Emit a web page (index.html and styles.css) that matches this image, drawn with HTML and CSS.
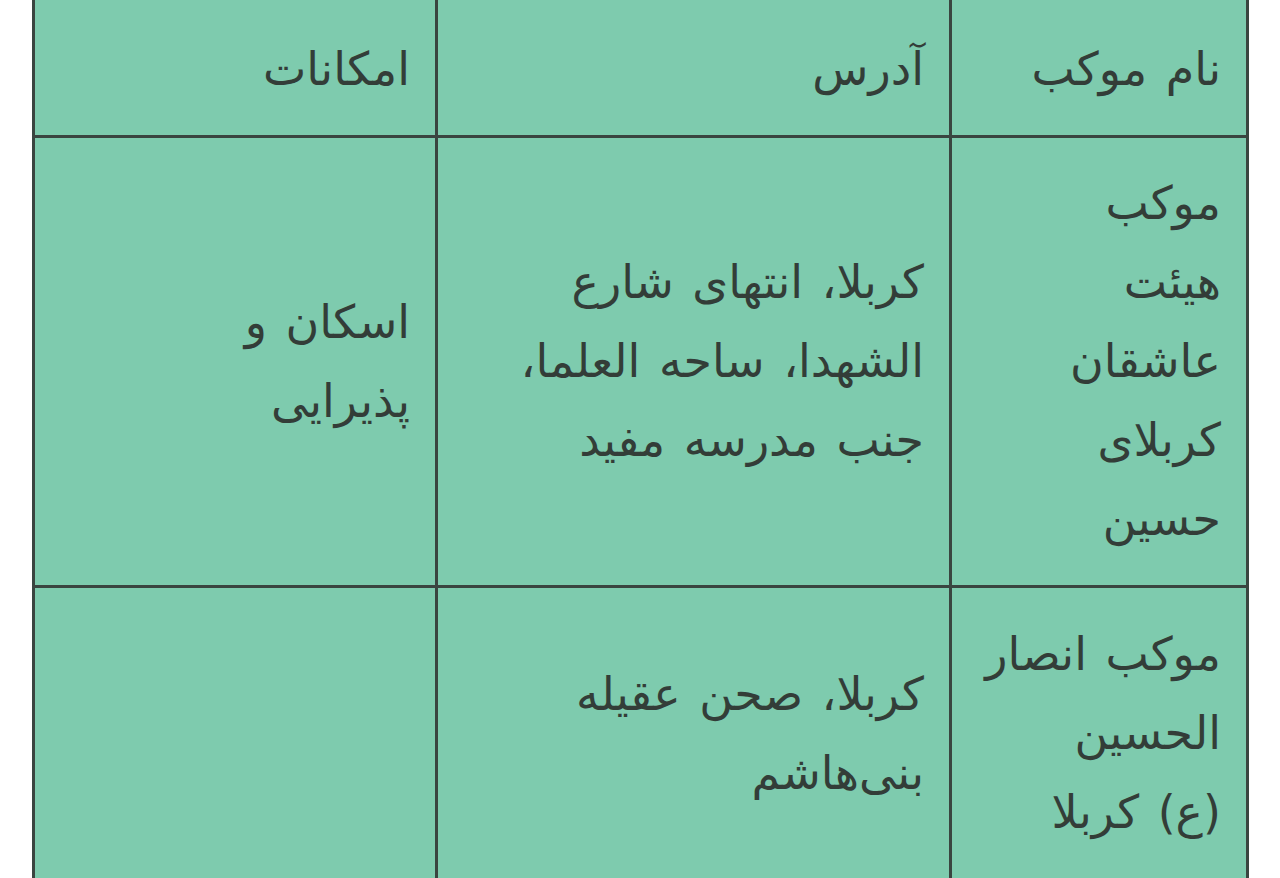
FILE: index.html
```html
<!DOCTYPE html>
<html lang="fa" dir="rtl">
<head>
<meta charset="utf-8">
<title>مواکب</title>
<link rel="stylesheet" href="styles.css">
</head>
<body>
<div class="wrap">
<table class="mawakib">
  <colgroup>
    <col class="c-name">
    <col class="c-addr">
    <col class="c-fac">
  </colgroup>
  <thead>
    <tr>
      <th>نام موکب</th>
      <th>آدرس</th>
      <th>امکانات</th>
    </tr>
  </thead>
  <tbody>
    <tr>
      <td>موکب<br>هیئت<br>عاشقان<br>کربلای<br>حسین</td>
      <td>کربلا، انتهای شارع<br>الشهدا، ساحه العلما،<br>جنب مدرسه مفید</td>
      <td>اسکان و<br>پذیرایی</td>
    </tr>
    <tr>
      <td>موکب انصار<br>الحسین<br>(ع) کربلا</td>
      <td>کربلا، صحن عقیله<br>بنی‌هاشم</td>
      <td></td>
    </tr>
  </tbody>
</table>
</div>
</body>
</html>
```
FILE: styles.css
```css
html, body {
  margin: 0;
  padding: 0;
  background: #ffffff;
}
body {
  font-family: "DejaVu Sans", "Noto Sans", sans-serif;
  color: #333d38;
  overflow: hidden;
}
.wrap {
  padding: 0 31px 0 32px;
  margin-top: -4px;
}
.mawakib {
  width: 100%;
  border-collapse: collapse;
  table-layout: fixed;
  background: #7ecbae;
  font-size: 46px;
  line-height: 79px;
}
.c-name { width: 297px; }
.c-addr { width: 514px; }
.c-fac { width: auto; }
.mawakib th,
.mawakib td {
  border: 3px solid #3a4540;
  padding: 26px 25px;
  text-align: right;
  vertical-align: middle;
  font-weight: normal;
  white-space: nowrap;
  word-spacing: 4px;
}
.mawakib th {
  padding-top: 31px;
}
.mawakib tbody tr:last-child td {
  padding-bottom: 30px;
  padding-top: 27px;
}
```
